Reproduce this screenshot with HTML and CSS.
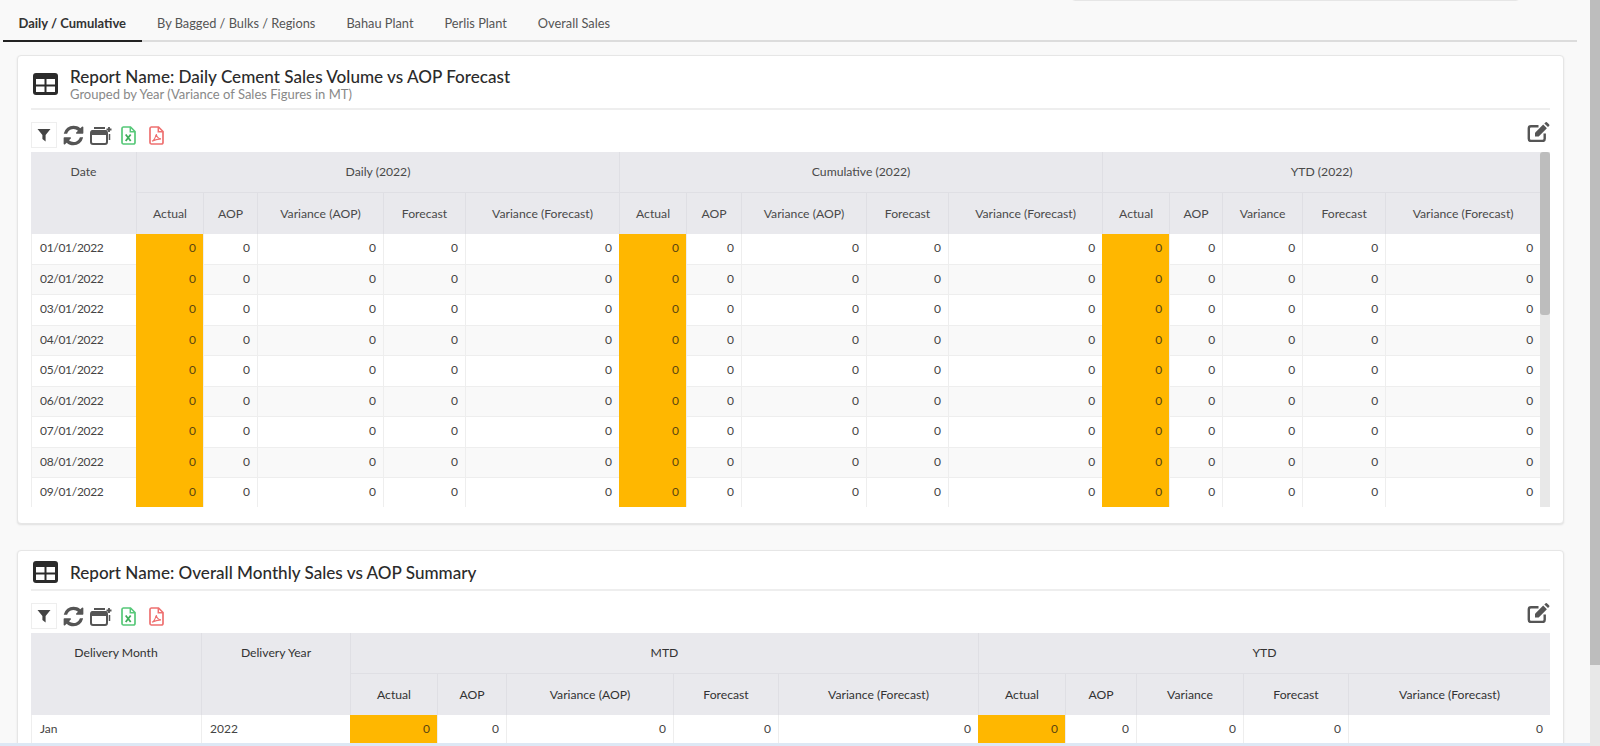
FILE: index.html
```html
<!DOCTYPE html>
<html lang="en">
<head>
<meta charset="utf-8">
<title>Daily Cement Sales</title>
<link rel="stylesheet" href="styles.css">
</head>
<body>
<svg class="defs" xmlns="http://www.w3.org/2000/svg">
  <symbol id="i-table" viewBox="0 0 25 22">
    <rect width="25" height="22" rx="3" fill="#2b2b2b"/>
    <rect x="3" y="6" width="8.5" height="5.5" fill="#fff"/>
    <rect x="13.5" y="6" width="8.5" height="5.5" fill="#fff"/>
    <rect x="3" y="13.5" width="8.5" height="5.5" fill="#fff"/>
    <rect x="13.5" y="13.5" width="8.5" height="5.5" fill="#fff"/>
  </symbol>
  <symbol id="i-filter" viewBox="0 0 14 14">
    <path d="M.5 1h13L8.6 7v6.500L5.400 11V7z" fill="#444"/>
  </symbol>
  <symbol id="i-refresh" viewBox="0 0 1792 1792">
    <path fill="#555" d="M1639 1056q0 5-1 7-64 268-268 434.5t-478 166.5q-146 0-282.5-55t-243.5-157l-129 129q-19 19-45 19t-45-19-19-45v-448q0-26 19-45t45-19h448q26 0 45 19t19 45-19 45l-137 137q71 66 161 102t187 36q134 0 250-65t186-179q11-17 53-117 8-23 30-23h192q13 0 22.5 9.5t9.5 22.5zm25-800v448q0 26-19 45t-45 19h-448q-26 0-45-19t-19-45 19-45l138-138q-148-137-349-137-134 0-250 65t-186 179q-11 17-53 117-8 23-30 23h-199q-13 0-22.5-9.5t-9.5-22.5v-7q65-268 270-434.5t480-166.5q146 0 284 55.5t245 156.5l130-129q19-19 45-19t45 19 19 45z"/>
  </symbol>
  <symbol id="i-window" viewBox="0 0 22 19">
    <path d="M4 2h11" stroke="#555" stroke-width="2" fill="none"/>
    <rect x="1" y="5" width="16" height="13" rx="2" fill="#fff" stroke="#555" stroke-width="2"/>
    <path d="M1 6a2 2 0 0 1 2-2h12a2 2 0 0 1 2 2v3H1z" fill="#555"/>
    <path d="M16.500 3.500h5M19 1v5" stroke="#555" stroke-width="1.800" fill="none"/>
    <path d="M19.500 8v6" stroke="#555" stroke-width="1.500" fill="none"/>
  </symbol>
  <symbol id="i-excel" viewBox="0 0 15 19">
    <path d="M2.300 1h7.200l4.500 4.500v11a1.500 1.500 0 0 1-1.500 1.500H2.300A1.500 1.500 0 0 1 1 16.500v-14A1.500 1.500 0 0 1 2.300 1z" fill="#fff" stroke="#56c878" stroke-width="1.700"/>
    <path d="M9.300 1v4.700H14" fill="none" stroke="#56c878" stroke-width="1.500"/>
    <path d="M4.700 8.500l5 6.500M9.700 8.500l-5 6.500" stroke="#3fae5a" stroke-width="1.800" fill="none"/>
  </symbol>
  <symbol id="i-pdf" viewBox="0 0 15 19">
    <path d="M2.300 1h7.200l4.500 4.500v11a1.500 1.500 0 0 1-1.500 1.500H2.300A1.500 1.500 0 0 1 1 16.500v-14A1.500 1.500 0 0 1 2.300 1z" fill="#fff" stroke="#ee7070" stroke-width="1.700"/>
    <path d="M9.300 1v4.700H14" fill="none" stroke="#ee7070" stroke-width="1.500"/>
    <path d="M3 15.300c2-1 3.500-4 4.200-7.300.5 3 2 4.500 4.800 4.800-3 .1-6 .8-9 2.500z" fill="none" stroke="#ee7070" stroke-width="1.200"/>
  </symbol>
  <symbol id="i-edit" viewBox="0 0 23 20">
    <path d="M11.500 4.300H4a2.200 2.200 0 0 0-2.200 2.200v10.300A2.200 2.200 0 0 0 4 19h11.500a2.200 2.200 0 0 0 2.200-2.200v-5.300" fill="none" stroke="#555" stroke-width="2.400"/>
    <path d="M8 10.800 16.200 2.600l3.700 3.700-8.200 8.200H8z" fill="#555"/>
    <path d="M17.300 1.500l1.100-1.100a1.200 1.200 0 0 1 1.700 0l1.900 1.900a1.200 1.200 0 0 1 0 1.700L21 5.100z" fill="#555"/>
  </symbol>
</svg>

<div class="page">
  <main class="main">
    <div class="search-edge"></div>
    <nav class="tabs">
      <a class="tab active">Daily / Cumulative</a>
      <a class="tab">By Bagged / Bulks / Regions</a>
      <a class="tab">Bahau Plant</a>
      <a class="tab">Perlis Plant</a>
      <a class="tab">Overall Sales</a>
    </nav>

    <section class="card card-daily">
      <header class="card-head head-tall">
        <svg class="ic-table"><use href="#i-table"/></svg>
        <div class="titles">
          <h2 class="title">Report Name: Daily Cement Sales Volume vs AOP Forecast</h2>
          <p class="subtitle">Grouped by Year (Variance of Sales Figures in MT)</p>
        </div>
      </header>
      <div class="toolbar">
        <button class="filter-btn"><svg class="ic-filter"><use href="#i-filter"/></svg></button>
        <svg class="ic-refresh"><use href="#i-refresh"/></svg>
        <svg class="ic-window"><use href="#i-window"/></svg>
        <svg class="ic-file ic-excel"><use href="#i-excel"/></svg>
        <svg class="ic-file ic-pdf"><use href="#i-pdf"/></svg>
        <svg class="ic-edit"><use href="#i-edit"/></svg>
      </div>
      <div class="grid-wrap">
        <table class="grid grid-daily">
          <colgroup><col><col><col><col><col><col><col><col><col><col><col><col><col><col><col><col></colgroup>
          <thead>
            <tr class="head-1">
              <th rowspan="2" class="top">Date</th>
              <th colspan="5">Daily (2022)</th>
              <th colspan="5">Cumulative (2022)</th>
              <th colspan="5">YTD (2022)</th>
            </tr>
            <tr class="head-2">
              <th>Actual</th><th>AOP</th><th>Variance (AOP)</th><th>Forecast</th><th>Variance (Forecast)</th>
              <th>Actual</th><th>AOP</th><th>Variance (AOP)</th><th>Forecast</th><th>Variance (Forecast)</th>
              <th>Actual</th><th>AOP</th><th>Variance</th><th>Forecast</th><th>Variance (Forecast)</th>
            </tr>
          </thead>
          <tbody>
            <tr><td class="txt date">01/01/2022</td><td class="hl">0</td><td>0</td><td>0</td><td>0</td><td>0</td><td class="hl">0</td><td>0</td><td>0</td><td>0</td><td>0</td><td class="hl">0</td><td>0</td><td>0</td><td>0</td><td>0</td></tr>
            <tr><td class="txt date">02/01/2022</td><td class="hl">0</td><td>0</td><td>0</td><td>0</td><td>0</td><td class="hl">0</td><td>0</td><td>0</td><td>0</td><td>0</td><td class="hl">0</td><td>0</td><td>0</td><td>0</td><td>0</td></tr>
            <tr><td class="txt date">03/01/2022</td><td class="hl">0</td><td>0</td><td>0</td><td>0</td><td>0</td><td class="hl">0</td><td>0</td><td>0</td><td>0</td><td>0</td><td class="hl">0</td><td>0</td><td>0</td><td>0</td><td>0</td></tr>
            <tr><td class="txt date">04/01/2022</td><td class="hl">0</td><td>0</td><td>0</td><td>0</td><td>0</td><td class="hl">0</td><td>0</td><td>0</td><td>0</td><td>0</td><td class="hl">0</td><td>0</td><td>0</td><td>0</td><td>0</td></tr>
            <tr><td class="txt date">05/01/2022</td><td class="hl">0</td><td>0</td><td>0</td><td>0</td><td>0</td><td class="hl">0</td><td>0</td><td>0</td><td>0</td><td>0</td><td class="hl">0</td><td>0</td><td>0</td><td>0</td><td>0</td></tr>
            <tr><td class="txt date">06/01/2022</td><td class="hl">0</td><td>0</td><td>0</td><td>0</td><td>0</td><td class="hl">0</td><td>0</td><td>0</td><td>0</td><td>0</td><td class="hl">0</td><td>0</td><td>0</td><td>0</td><td>0</td></tr>
            <tr><td class="txt date">07/01/2022</td><td class="hl">0</td><td>0</td><td>0</td><td>0</td><td>0</td><td class="hl">0</td><td>0</td><td>0</td><td>0</td><td>0</td><td class="hl">0</td><td>0</td><td>0</td><td>0</td><td>0</td></tr>
            <tr><td class="txt date">08/01/2022</td><td class="hl">0</td><td>0</td><td>0</td><td>0</td><td>0</td><td class="hl">0</td><td>0</td><td>0</td><td>0</td><td>0</td><td class="hl">0</td><td>0</td><td>0</td><td>0</td><td>0</td></tr>
            <tr><td class="txt date">09/01/2022</td><td class="hl">0</td><td>0</td><td>0</td><td>0</td><td>0</td><td class="hl">0</td><td>0</td><td>0</td><td>0</td><td>0</td><td class="hl">0</td><td>0</td><td>0</td><td>0</td><td>0</td></tr>
          </tbody>
        </table>
        <div class="vscroll"><div class="vthumb"></div></div>
      </div>
    </section>

    <section class="card card-monthly">
      <header class="card-head head-short">
        <svg class="ic-table"><use href="#i-table"/></svg>
        <div class="titles">
          <h2 class="title">Report Name: Overall Monthly Sales vs AOP Summary</h2>
        </div>
      </header>
      <div class="toolbar">
        <button class="filter-btn"><svg class="ic-filter"><use href="#i-filter"/></svg></button>
        <svg class="ic-refresh"><use href="#i-refresh"/></svg>
        <svg class="ic-window"><use href="#i-window"/></svg>
        <svg class="ic-file ic-excel"><use href="#i-excel"/></svg>
        <svg class="ic-file ic-pdf"><use href="#i-pdf"/></svg>
        <svg class="ic-edit"><use href="#i-edit"/></svg>
      </div>
      <table class="grid grid-monthly">
        <colgroup><col><col><col><col><col><col><col><col><col><col><col><col></colgroup>
        <thead>
          <tr class="head-1">
            <th rowspan="2" class="top">Delivery Month</th>
            <th rowspan="2" class="top">Delivery Year</th>
            <th colspan="5">MTD</th>
            <th colspan="5">YTD</th>
          </tr>
          <tr class="head-2">
            <th>Actual</th><th>AOP</th><th>Variance (AOP)</th><th>Forecast</th><th>Variance (Forecast)</th>
            <th>Actual</th><th>AOP</th><th>Variance</th><th>Forecast</th><th>Variance (Forecast)</th>
          </tr>
        </thead>
        <tbody>
          <tr><td class="txt">Jan</td><td class="txt">2022</td><td class="hl">0</td><td>0</td><td>0</td><td>0</td><td>0</td><td class="hl">0</td><td>0</td><td>0</td><td>0</td><td>0</td></tr>
        </tbody>
      </table>
    </section>
    <div class="bottom-strip"></div>
  </main>
  <aside class="page-scroll"><div class="page-thumb"></div></aside>
</div>
</body>
</html>
```

FILE: styles.css
```css
* { box-sizing: border-box; }
html, body { margin: 0; height: 100%; overflow: hidden; }
body { background: #f9f9f9; font-family: Lato, "Noto Sans", sans-serif; font-size: 12px; color: #444; }
.defs { position: absolute; width: 0; height: 0; }

.page { display: flex; height: 746px; }
.main { position: relative; flex: 1; min-width: 0; overflow: hidden; }
.page-scroll { width: 10px; background: #e8e8e8; }
.page-thumb { height: 665px; background: #bdbdbd; }

.search-edge { position: absolute; top: -20px; left: 1071px; width: 449px; height: 21px; background: #fff; border: 1px solid #e6e6e6; border-radius: 4px; }
.bottom-strip { position: absolute; left: 0; right: 0; bottom: 0; height: 3px; background: #dde8f5; }

.tabs { display: flex; height: 42px; margin: 0 13px 0 3px; border-bottom: 2px solid #dcdcdc; }
.tab { display: block; height: 42px; padding: 15px 15.5px 0; font-size: 12.8px; line-height: 16px; color: #555; white-space: nowrap; }
.tab.active { font-size: 13px; color: #333; font-weight: 700; border-bottom: 2px solid #222; }

.card { margin: 13px 26px 0 17px; padding: 0 13px; background: #fff; border: 1px solid #e6e6e6; border-radius: 4px; box-shadow: 0 1px 2px rgba(0, 0, 0, .1); }
.card-daily { height: 469px; }
.card-monthly { margin-top: 26px; height: 230px; }

.card-head { display: flex; align-items: flex-start; border-bottom: 2px solid #eee; }
.head-tall { height: 54px; padding: 17px 0 0 2px; }
.head-short { height: 40px; padding: 10px 0 0 2px; }
.ic-table { width: 25px; height: 22px; flex: none; }
.titles { margin-left: 12px; }
.head-tall .titles { margin-top: -7px; }
.head-short .titles { margin-top: 1px; }
.title { margin: 0; font-size: 17.1px; line-height: 21px; font-weight: 500; color: #2b2b2b; }
.subtitle { margin: 0; font-size: 13px; line-height: 15px; color: #888; }

.toolbar { display: flex; align-items: center; height: 26px; margin-top: 12px; margin-bottom: 4px; }
.filter-btn { display: flex; align-items: center; justify-content: center; width: 26px; height: 26px; padding: 0; background: #fff; border: 1px solid #eee; }
.ic-filter { width: 14px; height: 14px; }
.ic-refresh { width: 23px; height: 23px; margin-left: 5px; }
.ic-window { width: 22px; height: 19px; margin-left: 5px; }
.ic-file { width: 15px; height: 19px; }
.ic-excel { margin-left: 9px; }
.ic-pdf { margin-left: 13px; }
.ic-edit { width: 23px; height: 20px; margin-left: auto; margin-top: -6px; }

.grid-wrap { display: flex; height: 355px; overflow: hidden; }
.vscroll { width: 10px; height: 355px; background: #e8e8e8; }
.vthumb { height: 163px; background: #bdbdbd; border-radius: 3px; }

.grid { table-layout: fixed; border-collapse: separate; border-spacing: 0; flex: none; }
.grid-daily { width: 1509px; }
.grid-monthly { width: 1519px; }
.grid th { padding: 0 4px; background: #e9e9ed; font-size: 12.2px; font-weight: 400; color: #4a4a4a; text-align: center; border-left: 1px solid #dfdfe4; }
.grid-monthly th { color: #333; }
.head-1 th { height: 41px; padding-bottom: 1px; border-bottom: 1px solid #dfdfe4; }
.head-1 th:first-child { border-left: 0; }
.head-2 th { height: 41px; padding-bottom: 1px; border-bottom: 0; }
.head-1 th.top { vertical-align: top; padding-top: 12px; border-bottom: 0; }
.grid td { height: 30.5px; padding: 0 7px 2px 8px; text-align: right; color: #444; border-left: 1px solid #eee; border-bottom: 1px solid #eee; white-space: nowrap; }
.grid td.txt { text-align: left; }
.grid td.date { letter-spacing: -.3px; }
.grid td.hl { background: #ffb700; color: #5a4510; border-color: #ffb700; }
.grid tbody tr:nth-child(even) td:not(.hl) { background: #f9f9f9; }

.grid-daily col:nth-child(1) { width: 105px; }
.grid-daily col:nth-child(2), .grid-daily col:nth-child(7), .grid-daily col:nth-child(12) { width: 67px; }
.grid-daily col:nth-child(3) { width: 54px; }
.grid-daily col:nth-child(4) { width: 126px; }
.grid-daily col:nth-child(5), .grid-daily col:nth-child(10) { width: 82px; }
.grid-daily col:nth-child(6), .grid-daily col:nth-child(11) { width: 154px; }
.grid-daily col:nth-child(8) { width: 55px; }
.grid-daily col:nth-child(9) { width: 125px; }
.grid-daily col:nth-child(13) { width: 53px; }
.grid-daily col:nth-child(14) { width: 80px; }
.grid-daily col:nth-child(15) { width: 83px; }
.grid-daily col:nth-child(16) { width: 155px; }

.grid-monthly col:nth-child(1) { width: 170px; }
.grid-monthly col:nth-child(2) { width: 149px; }
.grid-monthly col:nth-child(3), .grid-monthly col:nth-child(8) { width: 87px; }
.grid-monthly col:nth-child(4) { width: 69px; }
.grid-monthly col:nth-child(5) { width: 167px; }
.grid-monthly col:nth-child(6), .grid-monthly col:nth-child(11) { width: 105px; }
.grid-monthly col:nth-child(7) { width: 200px; }
.grid-monthly col:nth-child(9) { width: 71px; }
.grid-monthly col:nth-child(10) { width: 107px; }
.grid-monthly col:nth-child(12) { width: 202px; }
```
